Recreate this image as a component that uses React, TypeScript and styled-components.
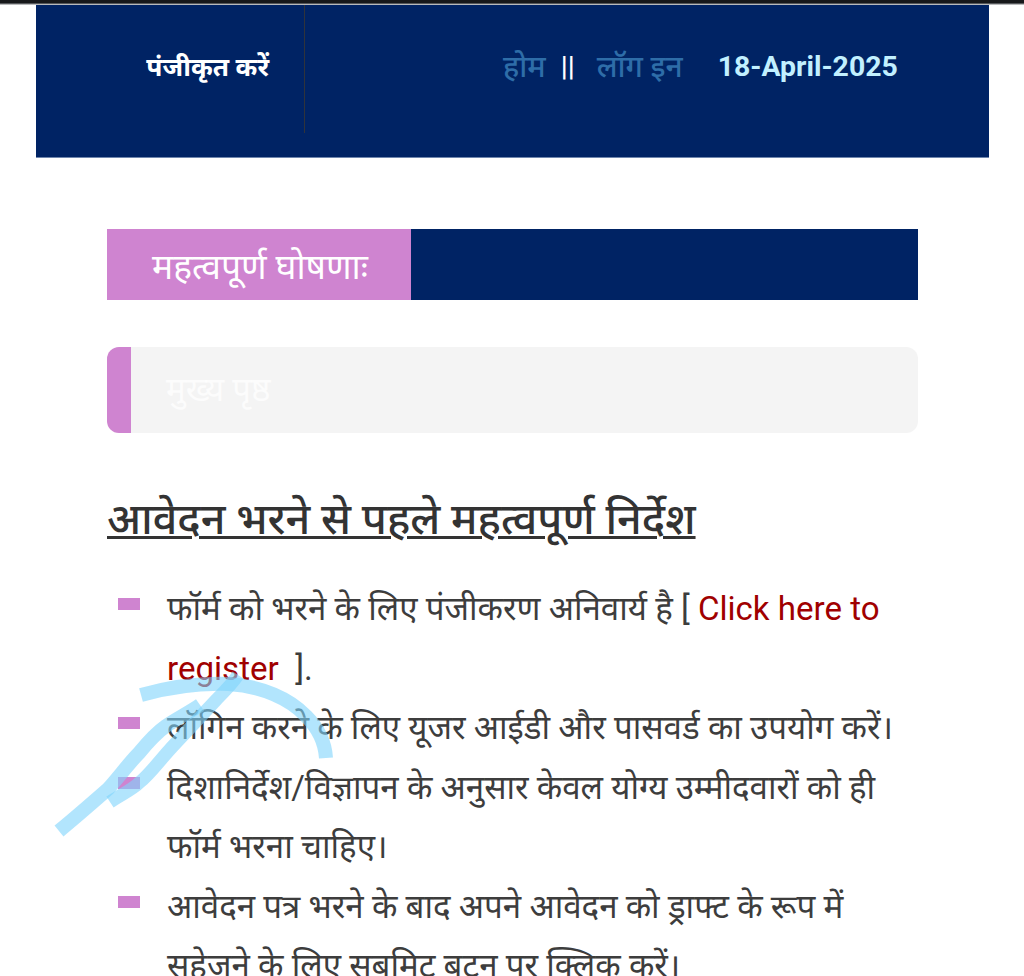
import React from "react";
import styled, { createGlobalStyle } from "styled-components";

const Global = createGlobalStyle`
  html, body { margin: 0; padding: 0; background: #fff; }
  body { height: 976px; overflow: hidden; font-family: Roboto, "Noto Sans", "Noto Sans Devanagari", sans-serif; }
`;
const Page = styled.div`
  position: relative; width: 1024px; height: 976px; overflow: hidden; background: #fff;
`;
const StatusEdge = styled.div`
  height: 5px;
  background: linear-gradient(#17181a 0 3px, #55575a 3px 4px, #b9babb 4px 5px);
`;
const Header = styled.header`
  margin: 0 35px 0 36px; height: 153px; background: #002364; display: flex;
  align-items: flex-start; border-bottom: 1px solid #6f86ad; box-sizing: border-box;
`;
const HeaderLeft = styled.div`
  width: 269px; height: 128px; box-sizing: border-box; border-right: 1px solid #2f333b;
  display: flex; justify-content: flex-end; padding: 44px 35px 0 0;
`;
const RegisterLink = styled.span`
  color: #fff; font-size: 26.3px; font-weight: 700; line-height: 36px; white-space: nowrap;
`;
const HeaderRight = styled.div`
  display: flex; align-items: center; padding: 44px 0 0 198px; height: 36px; font-size: 30px; line-height: 36px; font-weight: 500; white-space: nowrap;
`;
const NavLink = styled.span`color: #2e6da8;`;
const Sep = styled.span`color: #fff; font-size: 28px; margin: 0 22px 0 15px;`;
const DateText = styled.span`color: #c2f0ff; font-weight: 700; margin-left: 35px; font-size: 28.4px;`;
const Content = styled.main`
  padding: 71px 106px 0 107px;
`;
const Announcement = styled.div`
  height: 71px; display: flex; background: #002364;
`;
const AnnouncementLabel = styled.div`
  width: 304px; box-sizing: border-box; background: #cf84d0; color: #fff; font-size: 35.4px;
  padding-left: 45px; display: flex; align-items: center; white-space: nowrap;
`;
const Breadcrumb = styled.div`
  margin-top: 47px; height: 86px; background: #f4f4f4; border-radius: 12px; border-left: 24px solid #cf84d0;
  box-sizing: border-box; color: rgba(255, 255, 255, 0.75); font-size: 33px; display: flex; align-items: center;
  padding: 0 0 4px 35px;
`;
const Title = styled.h1`
  margin: 57px 0 0; font-size: 43.2px; font-weight: 500; line-height: 60px; color: #333; text-decoration: underline;
  text-decoration-thickness: 3px; white-space: nowrap;
`;
const List = styled.ul`
  list-style: none; margin: 29px 0 0; padding: 0;
`;
const Item = styled.li`
  position: relative; padding-left: 60px; font-size: 33.1px; line-height: 59.5px; color: #3d3d3d;
  &::before {
    content: ""; position: absolute; left: 11px; top: 19px; width: 22px; height: 12px; background: #cf84d0;
  }
`;
const Red = styled.span`color: #a00000;`;
const Scribble = styled.svg`
  position: absolute; left: 0; top: 0; pointer-events: none;
`;

export default function App() {
  return (
    <Page>
      <Global />
      <StatusEdge />
      <Header>
        <HeaderLeft><RegisterLink>पंजीकृत करें</RegisterLink></HeaderLeft>
        <HeaderRight>
          <NavLink>होम</NavLink>
          <Sep>||</Sep>
          <NavLink>लॉग इन</NavLink>
          <DateText>18-April-2025</DateText>
        </HeaderRight>
      </Header>
      <Content>
        <Announcement><AnnouncementLabel>महत्वपूर्ण घोषणाः</AnnouncementLabel></Announcement>
        <Breadcrumb>मुख्य पृष्ठ</Breadcrumb>
        <Title>आवेदन भरने से पहले महत्वपूर्ण निर्देश</Title>
        <List>
          <Item>फॉर्म को भरने के लिए पंजीकरण अनिवार्य है [ <Red>Click here to register</Red> &nbsp;].</Item>
          <Item>लॉगिन करने के लिए यूजर आईडी और पासवर्ड का उपयोग करें।</Item>
          <Item>दिशानिर्देश/विज्ञापन के अनुसार केवल योग्य उम्मीदवारों को ही फॉर्म भरना चाहिए।</Item>
          <Item>आवेदन पत्र भरने के बाद अपने आवेदन को ड्राफ्ट के रूप में सहेजने के लिए सबमिट बटन पर क्लिक करें।</Item>
        </List>
      </Content>
      <Scribble width="1024" height="976" viewBox="0 0 1024 976" fill="none">
        <path d="M141 695 C170 687 200 683 228 684 C262 686 290 699 306 716 C318 728 325 742 326 758" stroke="#7fd4fb" strokeOpacity="0.6" strokeWidth="14" />
        <path d="M59 831 C76 817 92 803 108 789 C118 778 130 762 139 753 C148 742 156 733 166 726 C178 718 190 712 200 705" stroke="#7fd4fb" strokeOpacity="0.6" strokeWidth="14" />
        <path d="M110 802 C122 794 132 790 140 782 C150 774 160 760 173 746 C190 728 205 712 217 699 C224 692 232 684 238 675" stroke="#7fd4fb" strokeOpacity="0.6" strokeWidth="13" />
      </Scribble>
    </Page>
  );
}
